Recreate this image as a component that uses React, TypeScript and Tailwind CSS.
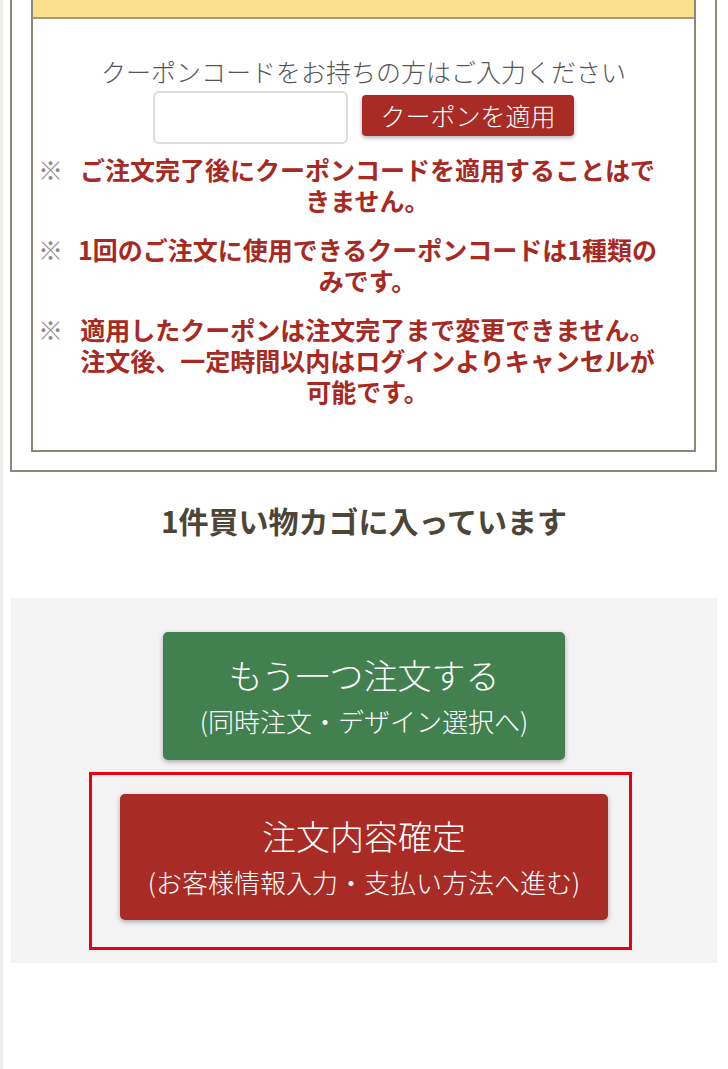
import React from 'react';

const notices = [
  'ご注文完了後にクーポンコードを適用することはできません。',
  '1回のご注文に使用できるクーポンコードは1種類のみです。',
  '適用したクーポンは注文完了まで変更できません。注文後、一定時間以内はログインよりキャンセルが可能です。',
];

function CouponBox() {
  return (
    <div className="ml-[10px] mr-[11px] border-x-2 border-b-2 border-[#8e887a] px-[19px] pb-[18px]">
      <div className="border-x-2 border-b-2 border-[#8e887a]">
        <div className="h-[19px] bg-[#f9e08f] border-b-2 border-[#a69c7a]" />
        <div className="pt-[34px] pb-[43px]">
          <p className="text-center text-[25px] leading-[36px] font-light text-[#555]">
            クーポンコードをお持ちの方はご入力ください
          </p>
          <div className="mt-[2px] flex justify-center items-start">
            <input
              type="text"
              className="w-[195px] h-[53px] rounded-[6px] border-2 border-[#dddddd] bg-white outline-none"
            />
            <button className="ml-[14px] mt-[4px] w-[212px] h-[41px] rounded-[4px] bg-[#a92b25] text-white text-[25px] leading-[41px] font-light shadow-[0_2px_4px_rgba(0,0,0,0.3)]">
              クーポンを適用
            </button>
          </div>
          <div className="mt-[10px] flex flex-col gap-[18px]">
            {notices.map((n, i) => (
              <div key={i} className="flex text-[25px] leading-[31px] font-bold">
                <span className="w-[43px] shrink-0 pl-[5px] font-normal text-[#8a8a8a]">※</span>
                <p className="flex-1 pr-[35px] text-center text-[#a8291f]">{n}</p>
              </div>
            ))}
          </div>
        </div>
      </div>
    </div>
  );
}

export default function App() {
  return (
    <div className="min-h-[1069px] bg-white border-l-[3px] border-[#ededed] font-['Noto_Sans_CJK_JP',sans-serif]">
      <div className="-ml-[3px]">
        <CouponBox />

        <h2 className="mt-[27px] text-center text-[30px] leading-[42px] font-bold text-[#4d4535]">
          1件買い物カゴに入っています
        </h2>

        <div className="mt-[57px] ml-[11px] mr-[11px] bg-[#f3f3f3] pt-[34px] pb-[13px]">
          <button className="mx-auto flex h-[128px] w-[402px] flex-col items-center justify-center rounded-[5px] bg-[#43804f] pt-[4px] text-white shadow-[0_2px_5px_rgba(0,0,0,0.3)]">
            <span className="text-[34px] leading-[46px] font-light">もう一つ注文する</span>
            <span className="text-[26px] leading-[46px] font-light">(同時注文・デザイン選択へ)</span>
          </button>

          <div className="mt-[12px] ml-[78px] w-[543px] border-[3px] border-[#e60012] pt-[19px] pb-[27px] pl-[28px]">
            <button className="flex h-[126px] w-[488px] flex-col items-center justify-center rounded-[5px] bg-[#a92b25] pt-[4px] text-white shadow-[0_2px_5px_rgba(0,0,0,0.3)]">
              <span className="text-[34px] leading-[46px] font-light">注文内容確定</span>
              <span className="text-[26px] leading-[46px] font-light">(お客様情報入力・支払い方法へ進む)</span>
            </button>
          </div>
        </div>
      </div>
    </div>
  );
}
